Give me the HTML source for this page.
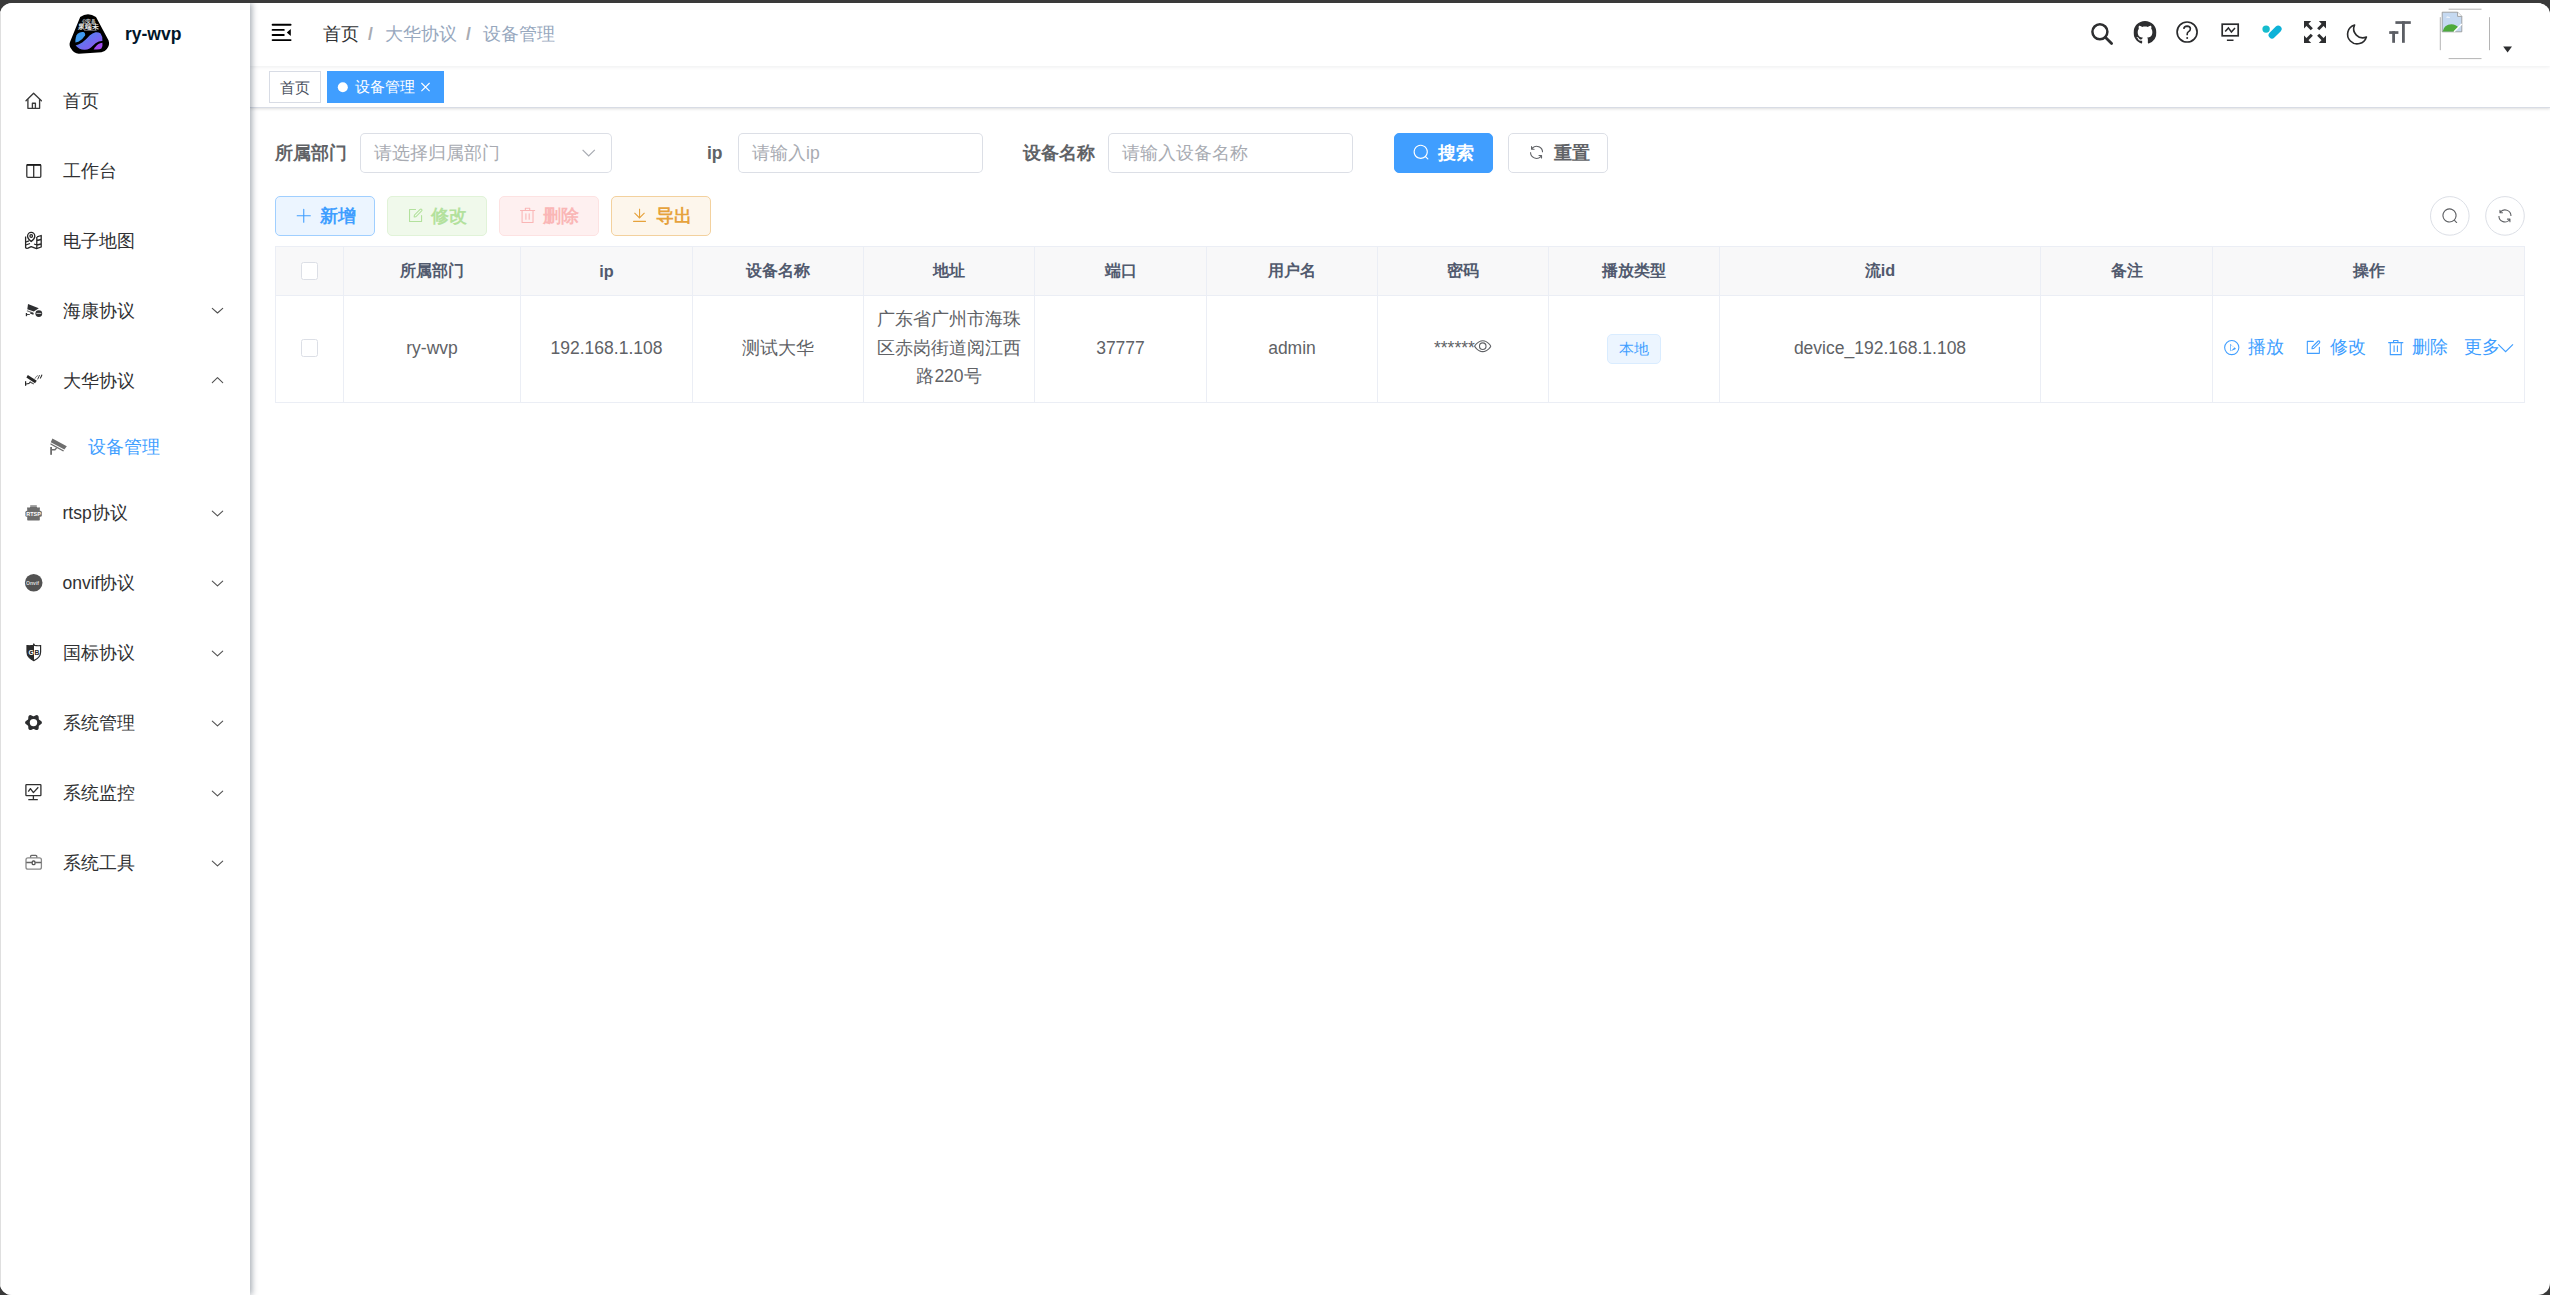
<!DOCTYPE html>
<html><head><meta charset="utf-8">
<style>
*{box-sizing:border-box}
html,body{margin:0;padding:0}
body{width:2550px;height:1295px;background:#3a3a3a;overflow:hidden;position:relative;font-family:"Liberation Sans",sans-serif;font-size:17.5px;color:#606266}
#frame{position:absolute;left:0;top:3px;width:2550px;height:1292px;background:#fff;border-radius:12px;overflow:hidden}
.abs{position:absolute}
#side{position:absolute;left:0;top:0;width:250px;height:1292px;background:#fff;box-shadow:2px 0 6px rgba(0,21,41,.35);z-index:5;border-left:1px solid #dfdfdf}
.mi{position:absolute;left:0;width:250px;height:70px;line-height:70px;color:#303133;font-size:17.5px;white-space:nowrap}
.mi .ic{position:absolute;left:25px;top:26px;width:18px;height:18px}
.mi .tx{position:absolute;left:61.5px;top:0}
.mi .ar{position:absolute;left:210px;top:30px;width:14px;height:10px}
#nav{position:absolute;left:250px;top:0;width:2300px;height:63px;background:#fff;box-shadow:0 1px 4px rgba(0,21,41,.08);z-index:3}
#tags{position:absolute;left:250px;top:63px;width:2300px;height:42px;background:#fff;border-bottom:1px solid #d8dce5;box-shadow:0 1px 3px 0 rgba(0,0,0,.12),0 0 3px 0 rgba(0,0,0,.04);z-index:2}
.tag{position:absolute;top:5px;height:32px;border:1px solid #d8dce5;font-size:15px;line-height:32px;color:#495060;background:#fff;white-space:nowrap}
.tag.act{background:#409eff;border-color:#409eff;color:#fff;font-weight:500;line-height:30px}
.lbl{position:absolute;font-weight:bold;color:#606266;font-size:17.5px;line-height:40px;white-space:nowrap}
.inp{position:absolute;height:40px;border-radius:5px;box-shadow:0 0 0 1px #dcdfe6 inset;background:#fff;color:#a8abb2;font-size:17.5px;line-height:40px;padding-left:14px;white-space:nowrap}
.btn{position:absolute;height:40px;border-radius:5px;border:1px solid #dcdfe6}
.bt{position:absolute;height:40px;font-size:17.5px;line-height:40px;white-space:nowrap;font-weight:bold}
.th,.td{position:absolute;border-right:1px solid #ebeef5;border-bottom:1px solid #ebeef5;display:flex;align-items:center;justify-content:center;text-align:center}
.th{background:#f8f8f9;color:#515a6e;font-weight:bold;font-size:16.25px}
.td{background:#fff;color:#606266;font-size:17.5px;padding-bottom:2px}
.ops{position:absolute;top:330px;font-size:17.5px;line-height:28px;color:#409eff;font-weight:500;white-space:nowrap}
.cb{width:17.5px;height:17.5px;border:1px solid #dcdfe6;border-radius:2.5px;background:#fff}
</style></head><body>
<div id="frame">

<!-- SIDEBAR -->
<div id="side">
  <div class="abs" style="left:68px;top:11px;width:41px;height:41px" id="logo"></div>
  <div class="abs" style="left:124px;top:17px;font-weight:bold;font-size:17.5px;line-height:28px;color:#001529">ry-wvp</div>

  <div class="mi" style="top:62.5px"><span class="tx">首页</span></div>
  <div class="mi" style="top:132.5px"><span class="tx">工作台</span></div>
  <div class="mi" style="top:202.5px"><span class="tx">电子地图</span></div>
  <div class="mi" style="top:272.5px"><span class="tx">海康协议</span></div>
  <div class="mi" style="top:342.5px"><span class="tx">大华协议</span></div>
  <div class="mi" style="top:412.5px;height:62.5px;line-height:62.5px;color:#409eff"><span class="tx" style="left:86.5px">设备管理</span></div>
  <div class="mi" style="top:475px"><span class="tx">rtsp协议</span></div>
  <div class="mi" style="top:545px"><span class="tx">onvif协议</span></div>
  <div class="mi" style="top:615px"><span class="tx">国标协议</span></div>
  <div class="mi" style="top:685px"><span class="tx">系统管理</span></div>
  <div class="mi" style="top:755px"><span class="tx">系统监控</span></div>
  <div class="mi" style="top:825px"><span class="tx">系统工具</span></div>
</div>

<!-- NAVBAR -->
<div id="nav">
  <div class="abs" style="left:73px;top:17px;font-size:17.5px;line-height:28px;color:#303133;white-space:nowrap">首页</div>
  <div class="abs" style="left:118px;top:17px;font-size:17.5px;line-height:28px;color:#a8abb2;font-weight:bold;white-space:nowrap">/</div>
  <div class="abs" style="left:135px;top:17px;font-size:17.5px;line-height:28px;color:#97a8be;white-space:nowrap">大华协议</div>
  <div class="abs" style="left:216px;top:17px;font-size:17.5px;line-height:28px;color:#a8abb2;font-weight:bold;white-space:nowrap">/</div>
  <div class="abs" style="left:233px;top:17px;font-size:17.5px;line-height:28px;color:#97a8be;white-space:nowrap">设备管理</div>
</div>

<!-- TAGS -->
<div id="tags">
  <div class="tag" style="left:19px;width:52px;padding-left:10px">首页</div>
  <div class="tag act" style="left:77px;width:117px;padding-left:27px">设备管理</div>
</div>

<!-- FORM -->
<div class="lbl" style="left:275px;top:130px">所属部门</div>
<div class="inp" style="left:360px;top:130px;width:252px">请选择归属部门</div>
<div class="lbl" style="left:707px;top:130px">ip</div>
<div class="inp" style="left:738px;top:130px;width:245px">请输入ip</div>
<div class="lbl" style="left:1023px;top:130px">设备名称</div>
<div class="inp" style="left:1108px;top:130px;width:245px">请输入设备名称</div>
<div class="btn" style="left:1394px;top:130px;width:99px;background:#409eff;border-color:#409eff"></div>
<div class="bt" style="left:1438px;top:130px;color:#fff">搜索</div>
<div class="btn" style="left:1508px;top:130px;width:100px;background:#fff"></div>
<div class="bt" style="left:1554px;top:130px;color:#606266">重置</div>

<div class="btn" style="left:275px;top:193px;width:100px;background:#ecf5ff;border-color:#a0cfff"></div>
<div class="bt" style="left:319.5px;top:193px;color:#409eff">新增</div>
<div class="btn" style="left:387px;top:193px;width:100px;background:#f0f9eb;border-color:#e1f3d8"></div>
<div class="bt" style="left:431px;top:193px;color:#b3e19d">修改</div>
<div class="btn" style="left:499px;top:193px;width:100px;background:#fef0f0;border-color:#fde2e2"></div>
<div class="bt" style="left:543px;top:193px;color:#fab6b6">删除</div>
<div class="btn" style="left:611px;top:193px;width:100px;background:#fdf6ec;border-color:#f3d19e"></div>
<div class="bt" style="left:655.5px;top:193px;color:#e6a23c">导出</div>

<!-- TABLE -->
<div id="table">
<div class="abs" style="left:275px;top:243px;width:2250px;height:1px;background:#ebeef5"></div>
<div class="abs" style="left:275px;top:243px;width:1px;height:157px;background:#ebeef5"></div>
<div class="th" style="left:276px;top:244px;width:68px;height:49px"><div class="cb"></div></div>
<div class="th" style="left:344px;top:244px;width:177px;height:49px">所属部门</div>
<div class="th" style="left:521px;top:244px;width:172px;height:49px">ip</div>
<div class="th" style="left:693px;top:244px;width:171px;height:49px">设备名称</div>
<div class="th" style="left:864px;top:244px;width:171px;height:49px">地址</div>
<div class="th" style="left:1035px;top:244px;width:172px;height:49px">端口</div>
<div class="th" style="left:1207px;top:244px;width:171px;height:49px">用户名</div>
<div class="th" style="left:1378px;top:244px;width:171px;height:49px">密码</div>
<div class="th" style="left:1549px;top:244px;width:171px;height:49px">播放类型</div>
<div class="th" style="left:1720px;top:244px;width:321px;height:49px">流id</div>
<div class="th" style="left:2041px;top:244px;width:172px;height:49px">备注</div>
<div class="th" style="left:2213px;top:244px;width:312px;height:49px">操作</div>
<div class="td" style="left:276px;top:293px;width:68px;height:107px"><div class="cb"></div></div>
<div class="td" style="left:344px;top:293px;width:177px;height:107px">ry-wvp</div>
<div class="td" style="left:521px;top:293px;width:172px;height:107px">192.168.1.108</div>
<div class="td" style="left:693px;top:293px;width:171px;height:107px">测试大华</div>
<div class="td" style="left:864px;top:293px;width:171px;height:107px"><div style="width:145px;line-height:28.5px">广东省广州市海珠区赤岗街道阅江西路220号</div></div>
<div class="td" style="left:1035px;top:293px;width:172px;height:107px">37777</div>
<div class="td" style="left:1207px;top:293px;width:171px;height:107px">admin</div>
<div class="td" style="left:1378px;top:293px;width:171px;height:107px"></div>
<div class="td" style="left:1549px;top:293px;width:171px;height:107px"></div>
<div class="td" style="left:1720px;top:293px;width:321px;height:107px">device_192.168.1.108</div>
<div class="td" style="left:2041px;top:293px;width:172px;height:107px"></div>
<div class="td" style="left:2213px;top:293px;width:312px;height:107px"></div>
<div class="abs" style="left:1434px;top:331px;font-size:17.5px;line-height:28px;color:#606266;white-space:nowrap">******</div>
<div class="abs" style="left:1607px;top:331px;width:54px;height:30px;border:1px solid #d9ecff;background:#ecf5ff;border-radius:5px;color:#409eff;font-size:15px;line-height:28px;text-align:center;white-space:nowrap">本地</div>
<div class="ops" style="left:2247.5px">播放</div>
<div class="ops" style="left:2329.5px">修改</div>
<div class="ops" style="left:2411.5px">删除</div>
<div class="ops" style="left:2463.5px">更多</div>
</div>

<svg id="ov" style="position:absolute;left:0;top:0;z-index:20;pointer-events:none" width="2550" height="1292" viewBox="0 3 2550 1292">
<defs>
<linearGradient id="lg1" x1="0" y1="0" x2="1" y2="1"><stop offset="0" stop-color="#3d8ff0"/><stop offset="1" stop-color="#9a4ff0"/></linearGradient>
</defs>
<!-- sidebar logo -->
<path d="M80.2,16.9 Q87.9,11.6 96,16.9 L108.6,40.6 Q110.2,45.6 106.6,49.2 Q104.8,51.8 101.4,52.2 L78.8,53.8 Q73.8,53.6 71,48.6 Q68.6,45 70.2,41.4 Z" fill="#000"/>
<path d="M75.4,42.4 Q75.2,36.6 77.6,33.8 Q80.4,31.4 83.4,32 Q85.8,33 85,35.6 Q82.8,39.6 78.4,41.8 Z" fill="#3f9af0"/>
<path d="M75.6,45.6 Q79.6,50.2 85,49.8 Q89.6,49.4 92.6,46 Q95.4,42.8 98.8,41.4 Q101.2,40.8 102.4,41 Q102.6,36 100.6,33.6 Q98.6,31.8 95.6,32.2 Q92.4,32.8 89.6,35.6 Q86.2,39.6 82.2,42.6 Q79,44.6 75.6,45.6 Z" fill="url(#lg1)"/>
<path d="M93.6,49.4 Q96.4,44.4 100.2,43.2 Q101.8,42.8 102.4,42.8 Q103,46.8 101.4,48.6 Q99.4,50 93.6,49.4 Z" fill="#a04cf0"/>
<text x="81.8" y="22.8" font-size="4.6" font-weight="bold" fill="#fff" opacity=".85" textLength="13.9" lengthAdjust="spacingAndGlyphs">公安县</text><text x="78.3" y="29.2" font-size="6.8" font-weight="bold" fill="#fff" opacity=".9" textLength="20.4" lengthAdjust="spacingAndGlyphs">泉端未</text><rect x="84" y="30.2" width="12.6" height=".8" fill="#fff" opacity=".45"/>

<!-- sidebar icons -->
<g fill="none" stroke="#3a3a3a" stroke-width="1.35" stroke-linejoin="round" stroke-linecap="round">
 <path d="M26,100.8 L33.6,93.2 L41.4,100.8"/>
 <path d="M27.9,99.6 V108.3 H39.6 V99.6"/>
 <path d="M32.4,108 V103.2 H35.4 V108"/>
</g>
<g fill="none" stroke="#333" stroke-width="1.3">
 <rect x="26.8" y="164.6" width="14" height="12.7" rx="1"/>
 <path d="M33.7,165 V177"/>
</g>
<rect x="26.8" y="164" width="14" height="1.8" fill="#1a1a1a"/>
<g fill="none" stroke="#262626" stroke-width="1.3" stroke-linejoin="round">
 <path d="M25.6,236.5 V247.5 Q26,248.6 28,248.2 L31.2,246.6 L36.5,248.6 L41.2,247 V235.5 L37,236.8"/>
 <path d="M25.8,242 L29,240.8 M25.8,245 L30,243.5 M37,240.5 L41,239.5 M34,244 L37,245 L41,244 M36.8,237 V248"/>
 <path d="M31.2,241.5 Q27.4,238.5 27.6,236 A3.6,3.6 0 0 1 34.8,236 Q35,238.5 31.2,241.5 Z"/>
 <circle cx="31.2" cy="236" r="1.3"/>
</g>
<!-- hikvision -->
<g fill="#2e2f31">
 <path d="M28,304 L38.8,308.3 L33.8,311.4 L27.3,309.2 Z"/>
 <path d="M27,310.2 L33.5,312.4 L32.9,313.4 L26.8,311.3 Z" opacity=".7"/>
 <path d="M30.5,312.2 L34,313.6 L33.2,314.8 L30,313.6 Z"/>
 <rect x="25.8" y="313" width="1.3" height="3.2"/>
 <rect x="26" y="314" width="3.8" height="0.9"/>
 <circle cx="38.8" cy="313.6" r="3.4"/>
</g>
<rect x="36.3" y="312.9" width="5" height="1" fill="#fff" opacity=".75"/>
<!-- dahua -->
<g fill="#262626">
 <path d="M27.8,375 L36.8,380.8 L35,383.2 L26.4,377.6 Z"/>
 <path d="M30,381.2 L34,383.6 L33.6,384.6 L29.6,382.4 Z" opacity=".8"/>
 <rect x="25" y="381.2" width="1.2" height="4.6"/>
 <path d="M26,383.4 L28.8,383 L30,381.6 L30.6,382.2 L29.2,384 L26,384.4 Z"/>
</g>
<g fill="none" stroke="#333" stroke-width="1" stroke-linecap="round">
 <path d="M35,378.4 Q36,376.2 37.6,375.6" opacity=".6"/>
 <path d="M37.8,379 Q39,376.6 39.4,375.4" opacity=".9"/>
 <path d="M40.4,378 Q41.6,376.4 41.8,375" stroke-width="1.2"/>
</g>
<!-- sub camera -->
<g fill="#6e6e6e">
 <path d="M52.4,438.6 L66.8,446.2 L64.4,449.4 L50.8,442.2 Z"/>
 <path d="M50.6,443.2 L64,450.4 L63.2,451.4 L50.4,444.6 Z"/>
 <rect x="50.2" y="447" width="1.8" height="7.8"/>
 <path d="M51.6,449 H54.6 L56.4,447.2 L57,448.4 L55.2,450.4 H51.6 Z"/>
</g>
<!-- rtsp -->
<g fill="#6d6d6d">
 <rect x="27.2" y="507" width="12.6" height="13.6" rx="1.2"/>
 <rect x="30.2" y="505.4" width="6.6" height="1.3"/>
 <rect x="25.4" y="510.8" width="16.4" height="6" rx="1.5"/>
</g>
<rect x="28.2" y="506" width="1.6" height="1.6" fill="#fff"/><rect x="37.2" y="506" width="1.6" height="1.6" fill="#fff"/>
<text x="26.3" y="516" font-family="Liberation Sans" font-weight="bold" font-size="5.6" fill="#fff" textLength="14.6" lengthAdjust="spacingAndGlyphs">RTSP</text>
<!-- onvif -->
<circle cx="33.7" cy="582.8" r="8.8" fill="#525252"/>
<text x="26" y="585" font-family="Liberation Sans" font-weight="bold" font-size="4.6" fill="#ddd" textLength="13" lengthAdjust="spacingAndGlyphs">Onvif</text>
<!-- GB shield -->
<path d="M33.8,644.2 L34.6,645.4 Q37.8,646 40.6,645.6 V652 Q40.5,657.8 33.8,660.6 Q27.1,657.8 27,652 V645.6 Q30,646 33.2,645.4 Z" fill="none" stroke="#2a2a2a" stroke-width="1.2"/>
<path d="M33.8,644.2 L34,645.4 V660.6 Q27.1,657.8 27,652 V645.6 Q30,646 33.2,645.4 Z" fill="#2a2a2a"/>
<text x="28.6" y="655.4" font-family="Liberation Sans" font-weight="bold" font-size="6.8" fill="#fff">G</text>
<text x="34.6" y="655.4" font-family="Liberation Sans" font-weight="bold" font-size="6.8" fill="#2a2a2a">B</text>
<!-- gear -->
<path fill="#2c2d2f" fill-rule="evenodd" d="M41.90,722.60 L41.80,723.14 L41.52,723.66 L41.10,724.11 L40.60,724.50 L40.08,724.83 L39.60,725.13 L39.22,725.42 L38.96,725.75 L38.80,726.14 L38.74,726.62 L38.72,727.18 L38.70,727.80 L38.61,728.43 L38.43,729.02 L38.12,729.52 L37.70,729.87 L37.18,730.06 L36.60,730.08 L35.99,729.94 L35.40,729.70 L34.86,729.41 L34.36,729.15 L33.92,728.97 L33.50,728.90 L33.08,728.97 L32.64,729.15 L32.14,729.41 L31.60,729.70 L31.01,729.94 L30.40,730.08 L29.82,730.06 L29.30,729.87 L28.88,729.52 L28.57,729.02 L28.39,728.43 L28.30,727.80 L28.28,727.18 L28.26,726.62 L28.20,726.14 L28.04,725.75 L27.78,725.42 L27.40,725.13 L26.92,724.83 L26.40,724.50 L25.90,724.11 L25.48,723.66 L25.20,723.14 L25.10,722.60 L25.20,722.06 L25.48,721.54 L25.90,721.09 L26.40,720.70 L26.92,720.37 L27.40,720.07 L27.78,719.78 L28.04,719.45 L28.20,719.06 L28.26,718.58 L28.28,718.02 L28.30,717.40 L28.39,716.77 L28.57,716.18 L28.88,715.68 L29.30,715.33 L29.82,715.14 L30.40,715.12 L31.01,715.26 L31.60,715.50 L32.14,715.79 L32.64,716.05 L33.08,716.23 L33.50,716.30 L33.92,716.23 L34.36,716.05 L34.86,715.79 L35.40,715.50 L35.99,715.26 L36.60,715.12 L37.18,715.14 L37.70,715.33 L38.12,715.68 L38.43,716.18 L38.61,716.77 L38.70,717.40 L38.72,718.02 L38.74,718.58 L38.80,719.06 L38.96,719.45 L39.22,719.78 L39.60,720.07 L40.08,720.37 L40.60,720.70 L41.10,721.09 L41.52,721.54 L41.80,722.06 Z M33.50,718.90 A3.7,3.7 0 1 0 33.50,726.30 A3.7,3.7 0 1 0 33.50,718.90 Z"/>
<!-- monitor -->
<g fill="none" stroke="#2f2f2f" stroke-width="1.3" stroke-linejoin="round">
 <rect x="25.9" y="784.6" width="15" height="11" rx=".6"/>
 <path d="M28.3,791.6 L30.4,788.6 L33.4,792.6 L38.3,787.2"/>
 <path d="M33.4,796 V799.4 M28.3,799.6 H37.8"/>
</g>
<!-- toolbox -->
<g fill="none" stroke="#8a8a8a" stroke-width="1.3">
 <rect x="26" y="857.8" width="15.4" height="11.4" rx="2"/>
 <path d="M30.6,857.6 V856.2 Q30.6,855.3 31.6,855.3 H35.8 Q36.8,855.3 36.8,856.2 V857.6" stroke="#666"/>
 <path d="M26.2,862.5 H32 M35.2,862.5 H41.2" stroke="#666"/>
 <rect x="32.2" y="861" width="2.8" height="3.6" rx="1.2" stroke="#555"/>
</g>
<!-- chevrons -->
<g fill="none" stroke="#505050" stroke-width="1.1" stroke-linecap="round" stroke-linejoin="round">
 <path d="M212.3,168.3 L217.5,173 L222.7,168.3" display="none"/>
 <path d="M212.3,308.3 L217.5,313 L222.7,308.3"/>
 <path d="M212.3,382.6 L217.5,377.6 L222.7,382.6"/>
 <path d="M212.3,511.2 L217.5,515.9 L222.7,511.2"/>
 <path d="M212.3,581.2 L217.5,585.9 L222.7,581.2"/>
 <path d="M212.3,651.2 L217.5,655.9 L222.7,651.2"/>
 <path d="M212.3,721.2 L217.5,725.9 L222.7,721.2"/>
 <path d="M212.3,791.2 L217.5,795.9 L222.7,791.2"/>
 <path d="M212.3,861.2 L217.5,865.9 L222.7,861.2"/>
</g>

<!-- hamburger -->
<g stroke="#000" stroke-width="1.9" stroke-linecap="round">
 <path d="M272.6,24.7 H290.6 M272.6,29.9 H283.8 M272.6,35 H283.8 M272.6,40.1 H290.6"/>
</g>
<path d="M290.8,29 V35.9 L286.8,32.5 Z" fill="#000"/>

<!-- header icons -->
<g fill="none" stroke="#2d2e30" stroke-width="2.5">
 <circle cx="2099.9" cy="31.8" r="7.5"/>
 <path d="M2105.3,37.3 L2111.6,43.6" stroke-width="2.8" stroke-linecap="round"/>
</g>
<svg x="2133.5" y="21" width="23" height="23" viewBox="0 0 16 16"><path fill="#2d2e30" d="M8 0C3.58 0 0 3.58 0 8c0 3.54 2.29 6.53 5.47 7.59.4.07.55-.17.55-.38 0-.19-.01-.82-.01-1.49-2.01.37-2.53-.49-2.69-.94-.09-.23-.48-.94-.82-1.13-.28-.15-.68-.52-.01-.53.63-.01 1.08.58 1.23.82.72 1.21 1.87.87 2.33.66.07-.52.28-.87.51-1.07-1.78-.2-3.64-.89-3.64-3.95 0-.87.31-1.59.82-2.15-.08-.2-.36-1.02.08-2.12 0 0 .67-.21 2.2.82.64-.18 1.32-.27 2-.27.68 0 1.36.09 2 .27 1.53-1.04 2.2-.82 2.2-.82.44 1.1.16 1.92.08 2.12.51.56.82 1.27.82 2.15 0 3.07-1.87 3.75-3.65 3.95.29.25.54.73.54 1.48 0 1.07-.01 1.93-.01 2.2 0 .21.15.46.55.38A8.013 8.013 0 0016 8c0-4.42-3.58-8-8-8z"/></svg>
<g fill="none" stroke="#2a2b2d" stroke-width="1.7">
 <circle cx="2187.1" cy="32" r="10"/>
 <path d="M2183.8,28.9 Q2184,26.2 2187.1,26.1 Q2190.3,26.2 2190.4,28.8 Q2190.4,30.6 2188.6,31.6 Q2187.2,32.4 2187.2,34 V35.2" stroke-width="1.6"/>
</g>
<circle cx="2187.2" cy="37.9" r="1" fill="#2a2b2d"/>
<g fill="none" stroke="#2a2b2d" stroke-width="1.7">
 <rect x="2222.2" y="24.2" width="16" height="11.6"/>
 <path d="M2225.2,31.6 L2228.4,27.9 L2231.4,32 L2235,28" stroke-width="1.5"/>
 <path d="M2226.9,40.3 H2233.5" stroke-width="1.5"/>
</g>
<circle cx="2266.1" cy="29.1" r="3.7" fill="#15bccd"/>
<path d="M2272,35.2 L2278.2,29" stroke="#0db2d8" stroke-width="6.8" stroke-linecap="round"/>
<g fill="#2d2e30">
 <path d="M2304,21 H2311.2 L2304,28.4 Z"/><path d="M2306.8,24.2 L2311.8,29.2" stroke="#2d2e30" stroke-width="3"/>
 <path d="M2326,21 H2318.8 L2326,28.4 Z"/><path d="M2323.2,24.2 L2318.2,29.2" stroke="#2d2e30" stroke-width="3"/>
 <path d="M2304,43 H2311.2 L2304,35.6 Z"/><path d="M2306.8,39.8 L2311.8,34.8" stroke="#2d2e30" stroke-width="3"/>
 <path d="M2326,43 H2318.8 L2326,35.6 Z"/><path d="M2323.2,39.8 L2318.2,34.8" stroke="#2d2e30" stroke-width="3"/>
</g>
<path d="M2354.6,25 A9.6,9.6 0 1 0 2366.4,37 A9,9 0 0 1 2354.6,25 Z" fill="none" stroke="#2a2b2d" stroke-width="1.6" stroke-linejoin="round"/>
<g fill="#5b5e64">
 <rect x="2389.2" y="31.2" width="9.2" height="2.7"/><rect x="2392.2" y="31.2" width="2.8" height="11.6"/>
 <rect x="2395.4" y="21.2" width="15.4" height="2.7"/><rect x="2402" y="21.2" width="2.8" height="21.6"/>
</g>
<!-- avatar broken image -->
<g stroke="#b4b4b4" stroke-width="1" fill="none">
 <path d="M2448.6,9.2 H2481.5"/><path d="M2448.6,58.6 H2481.5"/><path d="M2440.3,17.2 V50.2"/><path d="M2489.5,17.2 V50.2"/>
</g>
<g>
 <path d="M2442.2,12.2 H2457.6 L2461.8,16.4 V31.8 H2442.2 Z" fill="#c5d9f1" stroke="#8f8f8f" stroke-width=".8"/>
 <path d="M2457.6,12.2 V16.4 H2461.8" fill="#fff" stroke="#8f8f8f" stroke-width=".8"/>
 <path d="M2442.6,31.6 Q2444,24.4 2451.5,24.2 Q2456,24.4 2458.6,27.6 L2454.6,31.6 Z" fill="#4eaa3c"/>
 <path d="M2454,31.8 L2461.8,24" stroke="#fff" stroke-width="1.4"/>
 <path d="M2446,17.6 Q2447,16 2448.5,16.8 Q2450,16.6 2450,17.8 Z" fill="#fff"/>
</g>
<path d="M2503.2,46.6 H2512 L2507.6,52.4 Z" fill="#2d2e30"/>

<!-- tags -->
<circle cx="342.8" cy="87.3" r="5" fill="#fff"/>
<path d="M421.4,83 L429.6,91.2 M429.6,83 L421.4,91.2" stroke="#fff" stroke-width="1.1"/>

<!-- select arrow -->
<path d="M582.6,149.8 L588.7,156 L594.8,149.8" fill="none" stroke="#a8abb2" stroke-width="1.2"/>
<!-- search btn icon -->
<svg x="1412.5" y="143.6" width="17.5" height="17.5" viewBox="0 0 1024 1024"><path fill="#fff" d="m795.904 750.72 124.992 124.928a32 32 0 0 1-45.248 45.248L750.656 795.904a416 416 0 1 1 45.248-45.248zM480 832a352 352 0 1 0 0-704 352 352 0 0 0 0 704z"/></svg>
<svg x="1527.8" y="143.6" width="17.5" height="17.5" viewBox="0 0 1024 1024"><path fill="#606266" d="M771.776 794.88A384 384 0 0 1 128 512h64a320 320 0 0 0 555.712 216.448H654.72a32 32 0 1 1 0-64h149.056a32 32 0 0 1 32 32v148.928a32 32 0 1 1-64 0v-50.56zM276.288 295.616h92.992a32 32 0 0 1 0 64H220.16a32 32 0 0 1-32-32V178.56a32 32 0 0 1 64 0v50.56A384 384 0 0 1 896.128 512h-64a320 320 0 0 0-555.776-216.384z"/></svg>
<!-- toolbar btn icons -->
<svg x="295" y="207" width="17.5" height="17.5" viewBox="0 0 1024 1024"><path fill="#409eff" d="M480 480V128a32 32 0 0 1 64 0v352h352a32 32 0 1 1 0 64H544v352a32 32 0 1 1-64 0V544H128a32 32 0 0 1 0-64h352z"/></svg>
<svg x="406.8" y="206.8" width="17.5" height="17.5" viewBox="0 0 1024 1024"><g fill="#b3e19d"><path d="M832 512a32 32 0 1 1 64 0v352a32 32 0 0 1-32 32H160a32 32 0 0 1-32-32V160a32 32 0 0 1 32-32h352a32 32 0 0 1 0 64H192v640h640V512z"/><path d="m469.952 554.24 52.8-7.552L847.104 222.4a32 32 0 1 0-45.248-45.248L477.44 501.44l-7.552 52.8zm422.4-422.4a96 96 0 0 1 0 135.808l-331.84 331.84a32 32 0 0 1-18.112 9.088L436.8 623.68a32 32 0 0 1-36.224-36.224l15.104-105.6a32 32 0 0 1 9.024-18.048l331.904-331.84a96 96 0 0 1 135.744 0z"/></g></svg>
<svg x="518.8" y="206.6" width="17.5" height="17.5" viewBox="0 0 1024 1024"><path fill="#fab6b6" d="M160 256H96a32 32 0 0 1 0-64h256V95.936a32 32 0 0 1 32-32h256a32 32 0 0 1 32 32V192h256a32 32 0 1 1 0 64h-64v672a32 32 0 0 1-32 32H192a32 32 0 0 1-32-32V256zm448-64v-64H416v64h192zM224 896h576V256H224v640zm192-128a32 32 0 0 1-32-32V416a32 32 0 0 1 64 0v320a32 32 0 0 1-32 32zm192 0a32 32 0 0 1-32-32V416a32 32 0 0 1 64 0v320a32 32 0 0 1-32 32z"/></svg>
<svg x="630.8" y="206.6" width="17.5" height="17.5" viewBox="0 0 1024 1024"><path fill="#e6a23c" d="M160 832h704a32 32 0 1 1 0 64H160a32 32 0 1 1 0-64zm384-253.696 236.288-236.352 45.248 45.248L508.8 704 192 387.2l45.248-45.248L480 584.704V128h64v450.304z"/></svg>
<!-- right toolbar circles -->
<circle cx="2449.8" cy="215.9" r="19.3" fill="#fff" stroke="#dcdfe6" stroke-width="1"/>
<circle cx="2505" cy="215.9" r="19.3" fill="#fff" stroke="#dcdfe6" stroke-width="1"/>
<svg x="2441.3" y="207.2" width="17.5" height="17.5" viewBox="0 0 1024 1024"><path fill="#606266" d="m795.904 750.72 124.992 124.928a32 32 0 0 1-45.248 45.248L750.656 795.904a416 416 0 1 1 45.248-45.248zM480 832a352 352 0 1 0 0-704 352 352 0 0 0 0 704z"/></svg>
<svg x="2496.2" y="207.2" width="17.5" height="17.5" viewBox="0 0 1024 1024"><path fill="#606266" d="M771.776 794.88A384 384 0 0 1 128 512h64a320 320 0 0 0 555.712 216.448H654.72a32 32 0 1 1 0-64h149.056a32 32 0 0 1 32 32v148.928a32 32 0 1 1-64 0v-50.56zM276.288 295.616h92.992a32 32 0 0 1 0 64H220.16a32 32 0 0 1-32-32V178.56a32 32 0 0 1 64 0v50.56A384 384 0 0 1 896.128 512h-64a320 320 0 0 0-555.776-216.384z"/></svg>
<!-- eye -->
<svg x="1474" y="337.4" width="17.5" height="17.5" viewBox="0 0 1024 1024"><path fill="#606266" d="M512 160c320 0 512 352 512 352S832 864 512 864 0 512 0 512s192-352 512-352zm0 64c-225.28 0-384.128 208.064-436.8 288 52.608 79.872 211.456 288 436.8 288 225.28 0 384.128-208.064 436.8-288-52.608-79.872-211.456-288-436.8-288zm0 64a224 224 0 1 1 0 448 224 224 0 0 1 0-448zm0 64a160.192 160.192 0 0 0-160 160c0 88.192 71.744 160 160 160s160-71.808 160-160-71.744-160-160-160z"/></svg>
<!-- ops icons -->
<svg x="2223" y="338.8" width="17.5" height="17.5" viewBox="0 0 1024 1024"><path fill="#409eff" d="M512 896a384 384 0 1 0 0-768 384 384 0 0 0 0 768zm0 64a448 448 0 1 1 0-896 448 448 0 0 1 0 896zm-48-247.616L668.608 512 464 375.616v272.768zm10.624-342.656 249.472 166.336a48 48 0 0 1 0 79.872L474.624 718.272A32 32 0 0 1 425.6 691.84V332.16a32 32 0 0 1 49.024-26.432z"/></svg>
<svg x="2304.6" y="338.6" width="17.5" height="17.5" viewBox="0 0 1024 1024"><g fill="#409eff"><path d="M832 512a32 32 0 1 1 64 0v352a32 32 0 0 1-32 32H160a32 32 0 0 1-32-32V160a32 32 0 0 1 32-32h352a32 32 0 0 1 0 64H192v640h640V512z"/><path d="m469.952 554.24 52.8-7.552L847.104 222.4a32 32 0 1 0-45.248-45.248L477.44 501.44l-7.552 52.8zm422.4-422.4a96 96 0 0 1 0 135.808l-331.84 331.84a32 32 0 0 1-18.112 9.088L436.8 623.68a32 32 0 0 1-36.224-36.224l15.104-105.6a32 32 0 0 1 9.024-18.048l331.904-331.84a96 96 0 0 1 135.744 0z"/></g></svg>
<svg x="2387" y="338.8" width="17.5" height="17.5" viewBox="0 0 1024 1024"><path fill="#409eff" d="M160 256H96a32 32 0 0 1 0-64h256V95.936a32 32 0 0 1 32-32h256a32 32 0 0 1 32 32V192h256a32 32 0 1 1 0 64h-64v672a32 32 0 0 1-32 32H192a32 32 0 0 1-32-32V256zm448-64v-64H416v64h192zM224 896h576V256H224v640zm192-128a32 32 0 0 1-32-32V416a32 32 0 0 1 64 0v320a32 32 0 0 1-32 32zm192 0a32 32 0 0 1-32-32V416a32 32 0 0 1 64 0v320a32 32 0 0 1-32 32z"/></svg>
<path d="M2498.2,344.4 L2505.6,351.6 L2513,344.4" fill="none" stroke="#409eff" stroke-width="1.2"/>
</svg>
</div>
</body></html>
